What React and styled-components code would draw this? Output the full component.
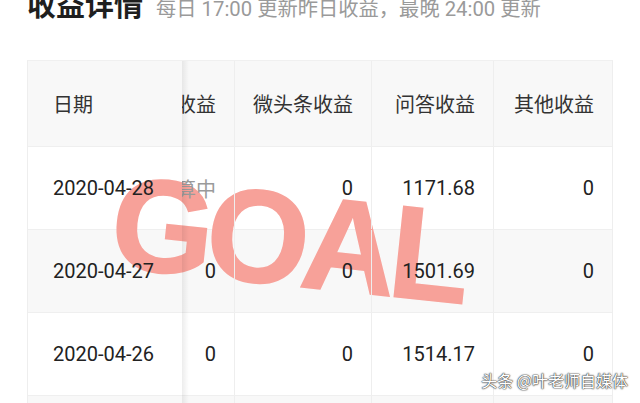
import React from "react";
import styled, { createGlobalStyle } from "styled-components";

const GlobalStyle = createGlobalStyle`
  html, body {
    margin: 0;
    padding: 0;
    background: #fff;
    overflow: hidden;
  }
  body {
    font-family: Roboto, "Noto Sans CJK SC", sans-serif;
  }
`;

const Page = styled.div`
  position: relative;
  width: 640px;
  height: 403px;
  overflow: hidden;
  padding: 0 27px;
  box-sizing: border-box;
`;

const Header = styled.div`
  display: flex;
  align-items: baseline;
  gap: 13px;
  margin-top: -8px;
  height: 28px;
`;

const Title = styled.h1`
  margin: 0;
  font-size: 29px;
  line-height: 28px;
  font-weight: 700;
  color: #1f1f1f;
`;

const Sub = styled.span`
  font-size: 20.3px;
  line-height: 28px;
  color: #9a9a9a;
`;

const Table = styled.div`
  margin-top: 40px;
  width: 586px;
  border-left: 1px solid #eeeeee;
  border-right: 1px solid #eeeeee;
  border-top: 1px solid #f0f0f0;
  box-sizing: border-box;
`;

const Row = styled.div`
  display: grid;
  grid-template-columns: 154px 52px 137px 122px 119px;
  height: ${(p) => (p.$head ? "86px" : "83px")};
  background: ${(p) => (p.$shade ? "#f8f8f8" : "#ffffff")};
  border-bottom: 1px solid #efefef;
  box-sizing: border-box;
  font-size: 20px;
  color: ${(p) => (p.$head ? "#333" : "#222")};
`;

const Cell = styled.div`
  position: relative;
  z-index: 2;
  display: flex;
  align-items: center;
  justify-content: flex-end;
  padding-right: 18px;
  overflow: hidden;
  white-space: nowrap;
  border-left: ${(p) => (p.$line ? "1px solid #eeeeee" : "none")};
  color: ${(p) => (p.$muted ? "#9a9a9a" : "inherit")};
`;

const DateCell = styled.div`
  position: relative;
  z-index: 3;
  display: flex;
  align-items: center;
  padding-left: 25px;
  white-space: nowrap;

  &::after {
    content: "";
    position: absolute;
    top: 0;
    bottom: -1px;
    right: -7px;
    width: 7px;
    background: linear-gradient(to right, rgba(0, 0, 0, 0.07), rgba(0, 0, 0, 0));
  }
`;

const Stamp = styled.div`
  position: absolute;
  left: 119px;
  top: 156px;
  font-family: "Liberation Sans", Arial, sans-serif;
  font-weight: 700;
  font-size: 132px;
  line-height: 1;
  letter-spacing: -7px;
  color: #f7a199;
  -webkit-text-stroke: 1.5px #f7a199;
  transform: rotate(6deg);
  transform-origin: left top;
  pointer-events: none;
  z-index: 1;
`;

const Credit = styled.div`
  position: absolute;
  right: 12px;
  bottom: 11px;
  font-family: "Noto Sans CJK SC", sans-serif;
  font-size: 16px;
  color: #fff;
  text-shadow: 0 0 1px #333, 0 0 1px #333, 0 0 2px #555;
  z-index: 6;
`;

const rows = [
  { date: "2020-04-28", a: "计算中", muted: true, b: "0", c: "1171.68", d: "0" },
  { date: "2020-04-27", a: "0", b: "0", c: "1501.69", d: "0" },
  { date: "2020-04-26", a: "0", b: "0", c: "1514.17", d: "0" },
  { date: "2020-04-25", a: "0", b: "0", c: "1488.02", d: "0" },
];

export default function App() {
  return (
    <>
      <GlobalStyle />
      <Page>
        <Header>
          <Title>收益详情</Title>
          <Sub>每日 17:00 更新昨日收益，最晚 24:00 更新</Sub>
        </Header>
        <Table>
          <Row $head $shade>
            <DateCell>日期</DateCell>
            <Cell>图文收益</Cell>
            <Cell $line>微头条收益</Cell>
            <Cell $line>问答收益</Cell>
            <Cell $line>其他收益</Cell>
          </Row>
          {rows.map((r, i) => (
            <Row key={r.date} $shade={i % 2 === 1}>
              <DateCell>{r.date}</DateCell>
              <Cell $muted={r.muted}>{r.a}</Cell>
              <Cell $line>{r.b}</Cell>
              <Cell $line>{r.c}</Cell>
              <Cell $line>{r.d}</Cell>
            </Row>
          ))}
        </Table>
        <Stamp>GOAL</Stamp>
        <Credit>头条 @叶老师自媒体</Credit>
      </Page>
    </>
  );
}
